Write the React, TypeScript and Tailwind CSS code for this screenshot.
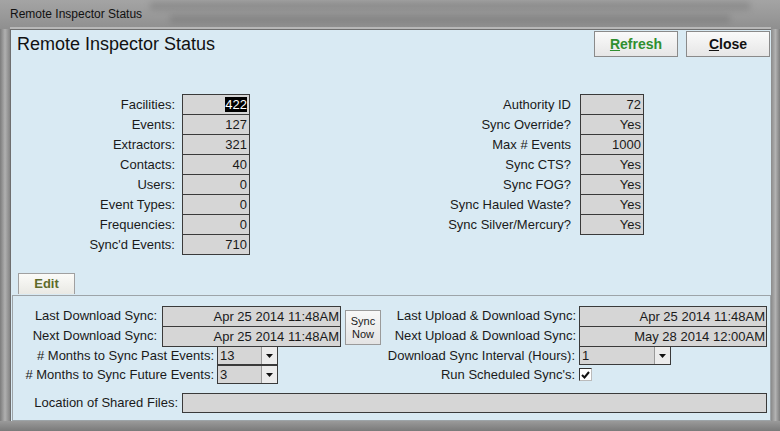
import React from "react";

const leftStats: [string, string][] = [
  ["Facilities:", "422"],
  ["Events:", "127"],
  ["Extractors:", "321"],
  ["Contacts:", "40"],
  ["Users:", "0"],
  ["Event Types:", "0"],
  ["Frequencies:", "0"],
  ["Sync'd Events:", "710"],
];

const rightStats: [string, string][] = [
  ["Authority ID", "72"],
  ["Sync Override?", "Yes"],
  ["Max # Events", "1000"],
  ["Sync CTS?", "Yes"],
  ["Sync FOG?", "Yes"],
  ["Sync Hauled Waste?", "Yes"],
  ["Sync Silver/Mercury?", "Yes"],
];

const label = "text-right text-[13px] text-[#1a1a1a]";

function StatBox({ value, selected, width }: { value: string; selected?: boolean; width: string }) {
  return (
    <div className={`${width} h-[21px] border border-[#3a3a3a] bg-[#d6d6d6] flex items-center justify-end pr-[2px] text-[13px] text-[#1a1a1a]`}>
      {selected ? <span className="bg-black text-white leading-[15px]">{value}</span> : value}
    </div>
  );
}

function Select({ value, width }: { value: string; width: string }) {
  return (
    <div className={`${width} h-[19px] border border-[#3a3a3a] bg-[#d6d6d6] flex items-stretch text-[13px] text-[#1a1a1a]`}>
      <div className="flex-1 pl-[2px] leading-[17px]">{value}</div>
      <div className="w-[16px] bg-[#ececec] border-l border-[#9a9a9a] flex items-center justify-center">
        <svg width="7" height="4" viewBox="0 0 7 4">
          <path d="M0 0h7L3.5 4z" fill="#111" />
        </svg>
      </div>
    </div>
  );
}

export default function App() {
  return (
    <div className="w-[780px] h-[431px] bg-[#8e8e8e] flex flex-col font-['Liberation_Sans',Arial,sans-serif] overflow-hidden">
      {/* title bar, blurred background window behind */}
      <div className="relative h-[29px] bg-gradient-to-b from-[#a4a4a4] via-[#9a9a9a] to-[#8f8f8f] overflow-hidden">
        <div className="absolute left-[150px] top-[2px] w-[600px] h-[8px] bg-[#6e6e6e] opacity-40 blur-[3px]" />
        <div className="absolute left-[170px] top-[15px] w-[560px] h-[8px] bg-[#6a6a6a] opacity-40 blur-[3px]" />
        <div className="absolute left-[10px] right-[9px] bottom-0 h-[2px] bg-[#b8b8b8]" />
        <div className="relative pl-[10px] pt-[6px] text-[12px] text-[#111] leading-[16px]">Remote Inspector Status</div>
      </div>

      <div className="flex h-[392px]">
        <div className="w-[10px] bg-gradient-to-r from-[#7c7c7c] via-[#b0b0b0] to-[#858585]" />

        <div className="w-[761px] bg-[#d9eaf3] flex flex-col border-l border-t border-[#6f6f6f]">
          {/* header */}
          <div className="flex items-center h-[26px] mt-[1px]">
            <div className="pl-[6px] text-[18px] text-[#111] flex-1">Remote Inspector Status</div>
            <button className="w-[84px] h-[26px] bg-gradient-to-b from-[#fafafa] to-[#e6e6e6] border border-[#8a8a8a] text-[14px] font-bold text-[#2f8f2f]">
              <span className="underline">R</span>efresh
            </button>
            <button className="ml-[8px] mr-[1px] w-[84px] h-[26px] bg-gradient-to-b from-[#fafafa] to-[#e6e6e6] border border-[#8a8a8a] text-[14px] font-bold text-[#111]">
              <span className="underline">C</span>lose
            </button>
          </div>

          {/* stats */}
          <div className="flex mt-[37px]">
            <div className="flex flex-col">
              {leftStats.map(([text, value], i) => (
                <div key={text} className={`flex items-center h-[21px] ${i > 0 ? "-mt-px" : ""}`}>
                  <div className={`w-[164px] ${label}`}>{text}</div>
                  <div className="ml-[7px]">
                    <StatBox value={value} selected={i === 0} width="w-[68px]" />
                  </div>
                </div>
              ))}
            </div>
            <div className="flex flex-col">
              {rightStats.map(([text, value], i) => (
                <div key={text} className={`flex items-center h-[21px] ${i > 0 ? "-mt-px" : ""}`}>
                  <div className={`w-[321px] ${label}`}>{text}</div>
                  <div className="ml-[9px]">
                    <StatBox value={value} width="w-[64px]" />
                  </div>
                </div>
              ))}
            </div>
          </div>

          {/* edit tab */}
          <div className="mt-[16px] ml-[7px]">
            <button className="w-[57px] h-[21px] bg-gradient-to-b from-[#fbfbf8] to-[#e9e9e4] border border-[#a0a0a0] border-b-0 text-[13px] font-bold text-[#5e6b2b]">
              Edit
            </button>
          </div>

          {/* sync panel */}
          <div className="ml-[1px] w-[759px] h-[126px] border border-[#9da4a8] flex flex-col">
            <div className="flex mt-[10px]">
              <div className="flex flex-col">
                <div className="flex items-center h-[20px]">
                  <div className={`w-[144px] ${label}`}>Last Download Sync:</div>
                  <div className="ml-[5px] w-[179px] h-[21px] border border-[#3a3a3a] bg-[#d6d6d6] text-right pr-[1px] text-[13px] leading-[19px] text-[#1a1a1a]">Apr 25 2014 11:48AM</div>
                </div>
                <div className="flex items-center h-[20px]">
                  <div className={`w-[144px] ${label}`}>Next Download Sync:</div>
                  <div className="ml-[5px] w-[179px] h-[21px] border border-[#3a3a3a] bg-[#d6d6d6] text-right pr-[1px] text-[13px] leading-[19px] text-[#1a1a1a]">Apr 25 2014 11:48AM</div>
                </div>
              </div>
              <button className="ml-[4px] mt-[4px] w-[36px] h-[35px] bg-gradient-to-b from-[#f8f8f8] to-[#e4e4e4] border border-[#9a9a9a] text-[11px] leading-[13px] text-[#1a1a1a] flex flex-col items-center justify-center">
                <span>Sync</span>
                <span>Now</span>
              </button>
              <div className="flex flex-col">
                <div className="flex items-center h-[20px]">
                  <div className={`w-[195px] ${label}`}>Last Upload &amp; Download Sync:</div>
                  <div className="ml-[3px] w-[188px] h-[21px] border border-[#3a3a3a] bg-[#d6d6d6] text-right pr-[1px] text-[13px] leading-[19px] text-[#1a1a1a]">Apr 25 2014 11:48AM</div>
                </div>
                <div className="flex items-center h-[20px]">
                  <div className={`w-[195px] ${label}`}>Next Upload &amp; Download Sync:</div>
                  <div className="ml-[3px] w-[188px] h-[21px] border border-[#3a3a3a] bg-[#d6d6d6] text-right pr-[1px] text-[13px] leading-[19px] text-[#1a1a1a]">May 28 2014 12:00AM</div>
                </div>
              </div>
            </div>

            <div className="flex">
              <div className="flex flex-col">
                <div className="flex items-center h-[19px]">
                  <div className={`w-[201px] ${label}`}>#&nbsp;Months to Sync Past Events:</div>
                  <div className="ml-[3px]"><Select value="13" width="w-[61px]" /></div>
                </div>
                <div className="flex items-center h-[19px]">
                  <div className={`w-[201px] ${label}`}>#&nbsp;Months to Sync Future Events:</div>
                  <div className="ml-[3px]"><Select value="3" width="w-[61px]" /></div>
                </div>
              </div>
              <div className="flex flex-col">
                <div className="flex items-center h-[19px]">
                  <div className={`w-[297px] ${label}`}>Download Sync Interval (Hours):</div>
                  <div className="ml-[4px]"><Select value="1" width="w-[92px]" /></div>
                </div>
                <div className="flex items-center h-[19px]">
                  <div className={`w-[297px] ${label}`}>Run Scheduled Sync's:</div>
                  <div className="ml-[4px] w-[13px] h-[13px] bg-white border border-[#333] border-r-[#bbb] border-b-[#bbb] flex items-center justify-center">
                    <svg width="9" height="8" viewBox="0 0 9 8">
                      <path d="M1 4l2.5 2.5L8 1" stroke="#111" strokeWidth="2" fill="none" />
                    </svg>
                  </div>
                </div>
              </div>
            </div>

            <div className="flex items-center mt-[9px]">
              <div className={`w-[165px] ${label}`}>Location of Shared Files:</div>
              <div className="ml-[4px] w-[585px] h-[20px] border border-[#3a3a3a] bg-[#d6d6d6]" />
            </div>
          </div>
        </div>

        <div className="w-[9px] bg-gradient-to-r from-[#8a8a8a] via-[#b2b2b2] to-[#7e7e7e]" />
      </div>

      <div className="h-[10px] bg-gradient-to-b from-[#9a9a9a] to-[#7a7a7a]" />
    </div>
  );
}
